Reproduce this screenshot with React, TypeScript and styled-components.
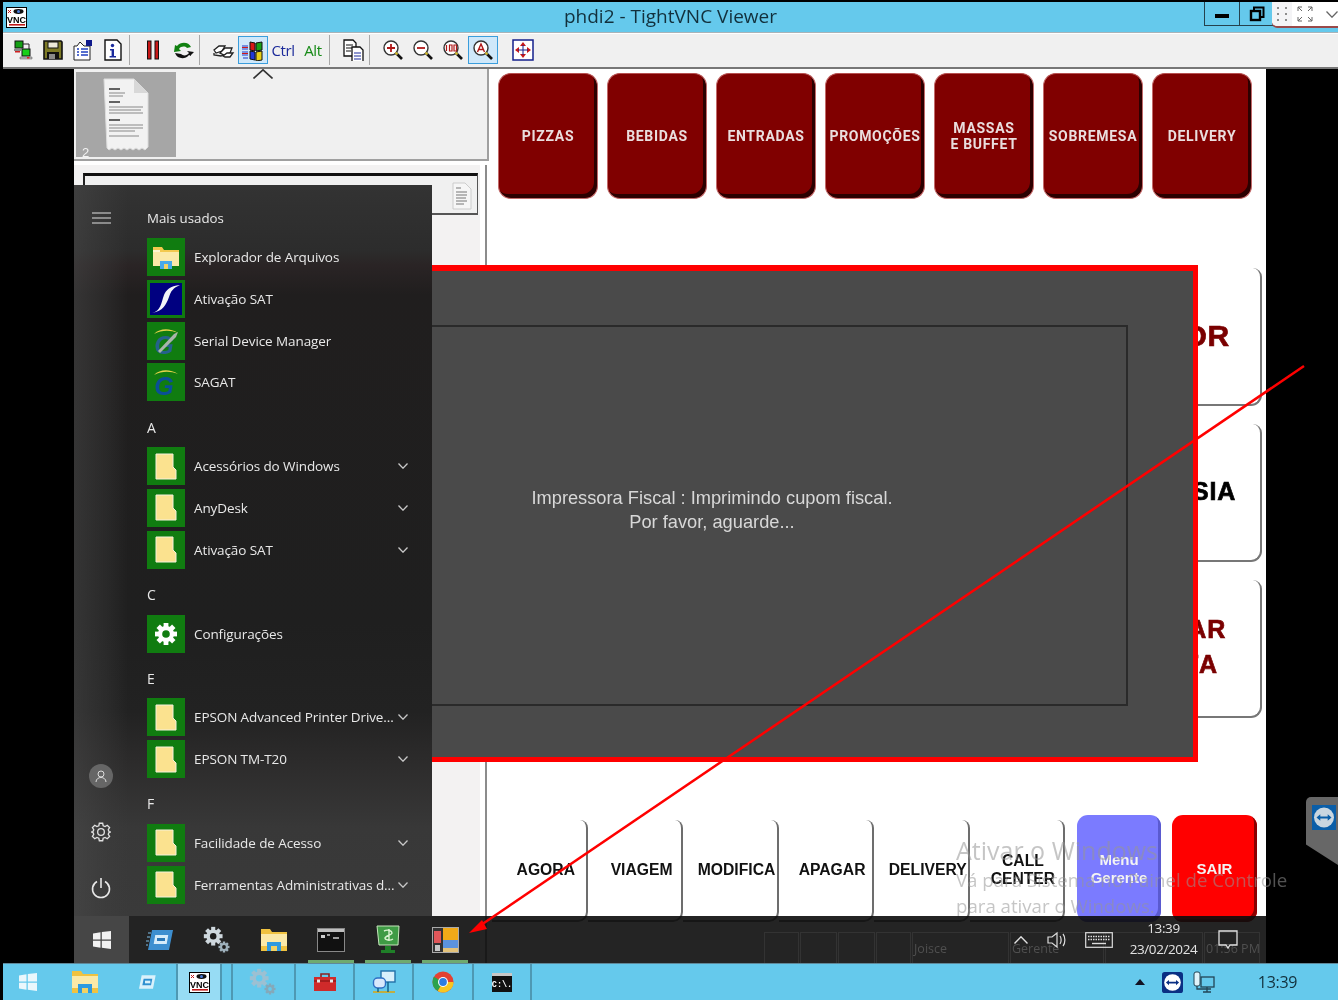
import React from "react";
import styled, { createGlobalStyle } from "styled-components";

const Global = createGlobalStyle`
  html, body { margin: 0; padding: 0; background: #000; }
  * { box-sizing: border-box; }
`;

const Desk = styled.div`
  position: relative;
  width: 1338px;
  height: 1000px;
  overflow: hidden;
  background: #000;
  padding: 2px 0 0 3px;
  display: flex;
  flex-direction: column;
  font-family: "Open Sans", "Liberation Sans", sans-serif;
  filter: blur(0.35px);
`;

const TitleBar = styled.div`
  position: relative;
  height: 30px;
  flex: none;
  background: #65c9ec;
  display: flex;
  align-items: center;
  padding-left: 3px;
`;
const TitleText = styled.div`
  position: absolute;
  left: 0;
  right: 0;
  top: 0;
  line-height: 29px;
  text-align: center;
  font-size: 19px;
  color: #12303c;
`;
const WinButtons = styled.div`
  position: absolute;
  top: 0;
  left: 1201px;
  display: flex;
`;
const WinButton = styled.div`
  width: 36px;
  height: 24px;
  border: 1px solid #24414d;
  border-top: none;
  margin-right: -1px;
  display: flex;
  align-items: center;
  justify-content: center;
`;
const Dash = styled.div`
  width: 14px;
  height: 4px;
  background: #000;
  margin-top: 4px;
`;
const RemoteBar = styled.div`
  position: absolute;
  right: 0;
  top: 0;
  width: 66px;
  height: 24px;
  background: #fff;
  border-bottom-left-radius: 5px;
  display: flex;
  align-items: center;
  box-shadow: 0 2px 0 #9a4a4a;
`;
const Grip = styled.div`
  width: 20px;
  height: 24px;
  background: #f4f4f6;
  display: flex;
  align-items: center;
  justify-content: center;
  border-bottom-left-radius: 5px;
`;

const Toolbar = styled.div`
  height: 37px;
  flex: none;
  background: #f0f0f0;
  border-top: 1px solid #a9b3b8;
  border-bottom: 2px solid #777;
  box-shadow: inset 0 1px 0 #fff;
  display: flex;
  align-items: center;
  padding-left: 5px;
`;
const ToolButton = styled.div<{ $on?: boolean }>`
  width: 30px;
  height: 28px;
  flex: none;
  display: flex;
  align-items: center;
  justify-content: center;
  background: ${(p) => (p.$on ? "#cfe8fa" : "transparent")};
  border: ${(p) => (p.$on ? "1px solid #3a9ddc" : "1px solid transparent")};
`;
const ToolSep = styled.div<{ $line?: boolean }>`
  width: 10px;
  height: 30px;
  flex: none;
  padding-left: 1px;
  &::before {
    content: "";
    display: block;
    width: 1px;
    height: 30px;
    background: ${(p) => (p.$line === false ? "transparent" : "#a8a8a8")};
  }
`;
const KeyLabel = styled.span<{ $c: string }>`
  font-family: "Open Sans", sans-serif;
  font-size: 15px;
  letter-spacing: -0.4px;
  color: ${(p) => p.$c};
`;

const Viewport = styled.div`
  flex: 1;
  min-height: 0;
  padding-left: 71px;
`;
const Screen = styled.div`
  position: relative;
  width: 1192px;
  height: 894px;
  background: #fff;
  display: grid;
  grid-template-columns: 415px 1fr;
  font-family: "Liberation Sans", Arial, sans-serif;
`;
const LeftCol = styled.div`
  display: flex;
  flex-direction: column;
  min-height: 0;
`;
const ThumbPanel = styled.div`
  height: 92px;
  flex: none;
  background: #f0f0f0;
  border-right: 2px solid #a0a0a0;
  border-bottom: 2px solid #a0a0a0;
  display: flex;
  padding: 3px 0 1px 2px;
  position: relative;
`;
const Thumb = styled.div`
  width: 100px;
  height: 85px;
  background: #a6a6a6;
  display: flex;
  align-items: flex-start;
  justify-content: center;
  padding-top: 6px;
  position: relative;
`;
const ThumbNo = styled.span`
  position: absolute;
  left: 6px;
  bottom: -3px;
  font-size: 13px;
  color: #f2f2f2;
`;
const UpChevron = styled.div`
  margin: -3px 0 0 77px;
  height: 12px;
  display: flex;
`;
const ListPanel = styled.div`
  flex: 1;
  margin: 4px 2px 0 0;
  background: #f3f2f2;
  border-right: 2px solid #8c8c8c;
  box-shadow: inset -5px 0 0 #fff;
  padding: 8px 7px 0 9px;
`;
const OrderBox = styled.div`
  height: 42px;
  background: #f0f0f0;
  border-top: 3px solid #111;
  border-left: 2px solid #222;
  border-bottom: 2px solid #555;
  border-right: 1px solid #555;
  display: flex;
  justify-content: flex-end;
  padding: 6px 5px 0 0;
`;

const RightCol = styled.div`
  display: flex;
  flex-direction: column;
  min-width: 0;
  padding-left: 9px;
`;
const CatRow = styled.div`
  margin-top: 4px;
  display: flex;
  gap: 9px;
  flex: none;
`;
const CatButton = styled.div`
  width: 100px;
  height: 126px;
  border-radius: 13px;
  background: #800000;
  border: 1px solid #c26a6a;
  border-top-color: #b75050;
  box-shadow: inset -3px -4px 0 #2c0000;
  display: flex;
  align-items: center;
  justify-content: center;
  text-align: center;
  color: #eadede;
  font-family: Roboto, "Liberation Sans", sans-serif;
  font-weight: 700;
  font-size: 14px;
  line-height: 16px;
  letter-spacing: 0.7px;
  white-space: pre-line;
  padding-bottom: 1px;
`;
const SideStack = styled.div`
  margin-top: 69px;
  align-self: flex-end;
  margin-right: 4px;
  display: flex;
  flex-direction: column;
  gap: 18px;
`;
const SideButton = styled.div<{ $c: string; $size: number; $right: number }>`
  width: 220px;
  height: 138px;
  background: #fff;
  border-right: 2px solid #777;
  border-bottom: 2px solid #777;
  border-radius: 0 9px 11px 0;
  display: flex;
  align-items: center;
  justify-content: flex-end;
  text-align: center;
  padding: 0 ${(p) => p.$right}px 2px 0;
  color: ${(p) => p.$c};
  font-weight: 700;
  font-size: ${(p) => p.$size}px;
  font-kerning: none;
  line-height: 35px;
  -webkit-text-stroke: 0.7px ${(p) => p.$c};
  letter-spacing: 0.8px;
  white-space: pre-line;
`;
const BottomRow = styled.div`
  margin: 102px 0 0 -6px;
  display: flex;
  flex: none;
`;
const ActionButton = styled.div`
  width: 95.5px;
  height: 102px;
  background: #fff;
  border-right: 2px solid #6d6d6d;
  border-bottom: 2px solid #6d6d6d;
  border-radius: 0 8px 10px 0;
  display: flex;
  align-items: center;
  justify-content: center;
  padding: 0 0 1px 14px;
  font-size: 16px;
  font-weight: 700;
  line-height: 18px;
  color: #111;
  text-align: center;
  white-space: pre-line;
`;
const ActionInner = styled.span`
  display: block;
  white-space: pre-line;
  transform: scaleX(0.98);
  flex: none;
`;
const ManagerButton = styled.div<{ $bg: string; $ml: number; $edge: string; $w: number }>`
  width: ${(p) => p.$w}px;
  height: 107px;
  margin: -5px 0 0 ${(p) => p.$ml}px;
  background: ${(p) => p.$bg};
  border-radius: 11px;
  box-shadow: inset -3px -3px 0 ${(p) => p.$edge};
  display: flex;
  align-items: center;
  justify-content: center;
  color: #f4f4f4;
  font-size: 15px;
  font-weight: 700;
  line-height: 18px;
  text-align: center;
  white-space: pre-line;
`;

const Dialog = styled.div`
  position: absolute;
  left: 152px;
  top: 196px;
  width: 972px;
  height: 497px;
  background: #4a4a4a;
  border: solid #f00;
  border-width: 6px 5px 5px 5px;
  padding: 54px 65px 51px;
  display: flex;
`;
const DialogInner = styled.div`
  flex: 1;
  border: 2px solid #2a2a2a;
  display: flex;
  align-items: center;
  justify-content: center;
  text-align: center;
  padding-bottom: 12px;
  color: #d8d8d8;
  font-size: 18.25px;
  line-height: 24px;
`;

const Watermark = styled.div`
  position: absolute;
  left: 882px;
  top: 765px;
  color: rgba(150, 150, 150, 0.55);
  font-family: "Open Sans", sans-serif;
  font-size: 18.65px;
  line-height: 26px;
  white-space: nowrap;
  pointer-events: none;
`;
const WatermarkHead = styled.div`
  font-size: 25px;
  line-height: 33px;
`;

const StartMenu = styled.div`
  position: absolute;
  left: 0;
  top: 116px;
  width: 358px;
  height: 731px;
  background: linear-gradient(
    180deg,
    #333 0,
    #2c2c2c 9%,
    #2a2425 11%,
    #201e1e 15%,
    #1f1f1f 60%,
    #222 72%,
    #2b2a2a 78%,
    #383838 88%,
    #3a3a3a 100%
  );
  display: flex;
  color: #e8e8e8;
  font-family: "Open Sans", sans-serif;
`;
const Rail = styled.div`
  width: 54px;
  flex: none;
  display: flex;
  flex-direction: column;
  align-items: center;
  background: linear-gradient(90deg, rgba(75, 75, 75, 0.5) 0, rgba(65, 65, 65, 0.3) 60%, rgba(54, 54, 54, 0) 100%);
`;
const RailTop = styled.div`
  height: 30px;
  margin-top: 18px;
  display: flex;
  align-items: center;
  flex: none;
`;
const RailBottom = styled.div`
  margin-top: auto;
  display: flex;
  flex-direction: column;
  align-items: center;
`;
const RailSlot = styled.div`
  height: 56px;
  width: 54px;
  display: flex;
  align-items: center;
  justify-content: center;
`;
const Avatar = styled.div`
  width: 24px;
  height: 24px;
  border-radius: 50%;
  background: #666;
  display: flex;
  align-items: center;
  justify-content: center;
`;
const MenuList = styled.div`
  flex: 1;
  padding: 9px 0 0 19px;
  display: grid;
  grid-auto-rows: 41.87px;
  min-width: 0;
`;
const MenuHead = styled.div<{ $first?: boolean }>`
  display: flex;
  align-items: center;
  padding-top: 6px;
  font-size: ${(p) => (p.$first ? 13.3 : 14)}px;
`;
const MenuItem = styled.div`
  display: flex;
  align-items: center;
  font-size: 13.5px;
  letter-spacing: -0.1px;
  min-width: 0;
`;
const Tile = styled.div`
  width: 38px;
  height: 38px;
  flex: none;
  background: #107c10;
  display: flex;
  align-items: center;
  justify-content: center;
  margin-right: 9px;
`;
const ItemName = styled.span`
  flex: 1;
  white-space: nowrap;
  min-width: 0;
`;
const ItemChevron = styled.div`
  width: 18px;
  flex: none;
  margin-right: 20px;
  display: flex;
  justify-content: center;
`;

const WinBar = styled.div`
  position: absolute;
  left: 0;
  top: 847px;
  width: 1192px;
  height: 47px;
  background: rgba(12, 12, 12, 0.9);
  display: flex;
  color: #dedede;
  font-family: "Open Sans", sans-serif;
`;
const StartCell = styled.div`
  width: 55px;
  background: #464646;
  display: flex;
  align-items: center;
  justify-content: center;
  flex: none;
  margin-right: 2.5px;
`;
const BarSlot = styled.div<{ $run?: boolean }>`
  position: relative;
  width: 57px;
  flex: none;
  display: flex;
  align-items: center;
  justify-content: center;
  &::after {
    content: "";
    display: ${(p) => (p.$run ? "block" : "none")};
    position: absolute;
    left: 5px;
    right: 6px;
    bottom: 0;
    height: 3px;
    background: #6faa6f;
  }
`;
const Tray = styled.div`
  margin-left: auto;
  display: flex;
  padding-right: 15px;
  z-index: 1;
`;
const TraySlot = styled.div<{ $w: number }>`
  width: ${(p) => p.$w}px;
  display: flex;
  align-items: center;
  justify-content: center;
`;
const Clock = styled.div`
  text-align: center;
  font-size: 13.5px;
  line-height: 21px;
  letter-spacing: -0.4px;
  margin-top: -2px;
  color: #e2e2e2;
`;
const GhostStrip = styled.div`
  position: absolute;
  left: 690px;
  top: 16px;
  bottom: 0;
  display: flex;
  color: #4f4f4f;
  font-size: 12.5px;
`;
const GhostCell = styled.div<{ $w: number }>`
  width: ${(p) => p.$w}px;
  border: 1px solid #333;
  border-bottom: none;
  margin-right: 1px;
  display: flex;
  align-items: center;
  padding-left: 1px;
  white-space: nowrap;
`;

const Taskbar = styled.div`
  height: 37px;
  flex: none;
  margin-top: auto;
  background: #65c9ec;
  border-top: 1px solid #5f8899;
  display: flex;
  color: #12303c;
  position: relative;
`;
const TaskSlot = styled.div<{ $w: number; $on?: boolean; $line?: boolean }>`
  width: ${(p) => p.$w}px;
  flex: none;
  display: flex;
  align-items: center;
  justify-content: center;
  background: ${(p) => (p.$on ? "#97dcf4" : "transparent")};
  border-right: ${(p) => (p.$line ? "2px solid #4e98b3" : "none")};
  border-left: ${(p) => (p.$on ? "2px solid #4e98b3" : "none")};
`;
const TaskTray = styled.div`
  margin-left: auto;
  display: flex;
  align-items: center;
  padding-right: 3px;
`;
const TrayIcon = styled.div`
  width: 32px;
  display: flex;
  justify-content: center;
`;
const TaskClock = styled.div`
  width: 115px;
  text-align: center;
  font-size: 16px;
  letter-spacing: -0.3px;
`;

const TvTab = styled.div`
  position: absolute;
  right: 0;
  top: 797px;
  width: 32px;
  height: 68px;
  background: #676767;
  border-top-left-radius: 5px;
  clip-path: polygon(0 0, 100% 0, 100% 100%, 0 70%);
  padding: 8px 0 0 6px;
`;
const ArrowLayer = styled.svg`
  position: absolute;
  left: 0;
  top: 0;
  pointer-events: none;
`;

const S: React.FC<{ w?: number; h?: number; vb?: string; children: React.ReactNode }> = ({
  w = 22,
  h = 22,
  vb,
  children,
}) => (
  <svg width={w} height={h} viewBox={vb ?? `0 0 ${w} ${h}`}>
    {children}
  </svg>
);

const VncLogo: React.FC<{ size?: number }> = ({ size = 21 }) => (
  <svg width={size} height={size} viewBox="0 0 21 21">
    <rect x="0.5" y="0.5" width="20" height="20" fill="#fff" stroke="#000" />
    <path d="M2 3l3 3M5 3L2 6" stroke="#c01818" strokeWidth="1" />
    <ellipse cx="12.5" cy="4.5" rx="5" ry="2.4" fill="#111" />
    <circle cx="12.5" cy="4.5" r="1.5" fill="#4a7bd8" />
    <text x="10.5" y="15.5" textAnchor="middle" fontFamily="Liberation Sans" fontWeight="700" fontSize="9" fill="#000">
      VNC
    </text>
    <rect x="3" y="17" width="16" height="1.6" fill="#c01818" />
  </svg>
);

const Mag: React.FC<{ children?: React.ReactNode }> = ({ children }) => (
  <S>
    <circle cx="9" cy="9" r="7" fill="#fff" stroke="#333" strokeWidth="1.4" />
    <path d="M14 14l6 6" stroke="#111" strokeWidth="2.6" />
    <path d="M13.5 13.5l2 2" stroke="#d8c030" strokeWidth="2" />
    {children}
  </S>
);

const ToolIcons = {
  conn: (
    <S>
      <rect x="3" y="2" width="8" height="7" fill="#14a014" stroke="#111" />
      <rect x="10" y="10" width="8" height="7" fill="#18d018" stroke="#111" />
      <path d="M11 5h6v5M2 11h7" stroke="#222" fill="none" />
      <rect x="3" y="12" width="5" height="1.5" fill="#d02020" />
      <path d="M8 18h12v2H8z" fill="#bbb" stroke="#555" strokeWidth=".5" />
      <rect x="15" y="18" width="2.5" height="1.5" fill="#e02020" />
    </S>
  ),
  save: (
    <S>
      <path d="M2 2h17l1 1v17H2z" fill="#7d7a26" stroke="#111" strokeWidth="1.6" />
      <rect x="6" y="3" width="10" height="6" fill="#ece9d8" stroke="#111" />
      <rect x="5" y="13" width="12" height="7" fill="#111" />
      <rect x="7" y="15" width="6" height="5" fill="#8a8a8a" />
    </S>
  ),
  opts: (
    <S>
      <path d="M2 7h3l3-4 4 4h6v14H2z" fill="#fff" stroke="#222" />
      <rect x="14" y="1" width="6" height="6" fill="#101a8c" />
      <path d="M5 10h2M9 10h7M5 13h2M9 13h7M5 16h2M9 16h7" stroke="#2040c0" strokeWidth="1.4" />
    </S>
  ),
  info: (
    <S>
      <path d="M3 1h12l4 4v16H3z" fill="#fff" stroke="#111" strokeWidth="1.4" />
      <circle cx="10.5" cy="6.5" r="1.7" fill="#1a2a9c" />
      <path d="M8 10h4v7h2v1.6H7.6V17h2v-5.4H8z" fill="#1a2a9c" />
    </S>
  ),
  pause: (
    <S>
      <rect x="5.5" y="2" width="3.5" height="18" fill="#c81818" stroke="#111" />
      <rect x="13" y="2" width="3.5" height="18" fill="#c81818" stroke="#111" />
    </S>
  ),
  refresh: (
    <S w={24}>
      <path d="M20 8C18 3 10 2 6 7l-2-1-1 7 7-1-2-2c2-3 6-3 8-1z" fill="#108010" />
      <path d="M4 14c2 6 10 7 14 2l2 1 0-1 3-3-7-1 2 2c-2 3-6 3-8 1z" fill="#111" />
    </S>
  ),
  cad: (
    <S w={24}>
      <path d="M3 11l5-4h6l-3 5-6 2z" fill="#fff" stroke="#222" strokeWidth="1.3" />
      <path d="M9 14l5-5h7l-2 5-6 2z" fill="#fff" stroke="#222" strokeWidth="1.3" />
      <path d="M12 17l4-3h6l-3 4h-5z" fill="#fff" stroke="#222" strokeWidth="1.3" />
      <path d="M3 14v2l7 1 2-1" fill="none" stroke="#222" strokeWidth="1.3" />
    </S>
  ),
  win: (
    <S w={24}>
      <path d="M9 3l5 1v8L9 11z" fill="#d81818" stroke="#111" />
      <path d="M15 4l6-1v8l-6 1z" fill="#18a018" stroke="#111" />
      <path d="M9 12l5 1v8l-5-1z" fill="#2038d8" stroke="#111" />
      <path d="M15 13l6-1v9l-6 1z" fill="#e8d018" stroke="#111" />
      <path d="M1 7h6M1 10h6M1 13h6M1 16h6M2 19h5" stroke="#2038c8" strokeWidth="1.2" />
      <path d="M1 8.5h6M1 14.5h6" stroke="#d01818" strokeWidth="1" />
    </S>
  ),
  copy: (
    <S w={24}>
      <path d="M3 1h9l3 3v13H3z" fill="#fff" stroke="#111" strokeWidth="1.3" />
      <path d="M5 6h7M5 9h7M5 12h5" stroke="#111" />
      <path d="M11 8h8l3 3v12H11z" fill="#fff" stroke="#111" strokeWidth="1.3" />
      <path d="M13 14h7M13 17h7M13 20h7" stroke="#1a2a9c" />
    </S>
  ),
  plus: (
    <Mag>
      <path d="M5 9h8M9 5v8" stroke="#b01818" strokeWidth="1.8" />
    </Mag>
  ),
  minus: (
    <Mag>
      <path d="M5 9h8" stroke="#b01818" strokeWidth="1.8" />
    </Mag>
  ),
  hundred: (
    <Mag>
      <path d="M4.5 6v6M7.5 6h2.5v6H7.5zM12 6h2.5v6H12z" stroke="#b01818" strokeWidth="1.2" fill="none" />
    </Mag>
  ),
  auto: (
    <Mag>
      <path d="M5.5 13l3.5-8 3.5 8M6.5 10.5h5" stroke="#b01818" strokeWidth="1.4" fill="none" />
    </Mag>
  ),
  full: (
    <S>
      <rect x="1" y="1" width="20" height="20" fill="#fff" stroke="#15208c" strokeWidth="1.5" />
      <path d="M11 3l3 4H8zM11 19l3-4H8zM3 11l4-3v6zM19 11l-4-3v6z" fill="#c81818" />
      <path d="M11 6v10M6 11h10" stroke="#15208c" />
    </S>
  ),
};

const DocPage: React.FC = () => (
  <svg width="46" height="74" viewBox="0 0 46 74">
    <path d="M1 1h30l14 14v54l-3 3-3-2-3 2-3-2-3 2-3-2-3 2-3-2-3 2-3-2-3 2-3-2-3 2-2-2z" fill="#f2f2f2" stroke="#dcdcdc" />
    <path d="M31 1l14 14H31z" fill="#d8d8d8" />
    <path d="M6 11h11M6 24h11M6 42h11" stroke="#333" strokeWidth="1.6" />
    <path d="M6 15h16M6 18h14M6 29h34M6 32h32M6 35h34M6 47h34M6 50h34M6 53h26M6 58h30" stroke="#888" strokeWidth="1.2" />
  </svg>
);
const DocSmall: React.FC = () => (
  <svg width="20" height="28" viewBox="0 0 20 28">
    <path d="M1 1h12l6 6v20H1z" fill="#f6f6f6" stroke="#ccc" />
    <path d="M4 6h5M4 10h11M4 13h11M4 16h10M4 19h11M4 22h8" stroke="#777" />
  </svg>
);

const FolderTile = (
  <svg width="22" height="27" viewBox="0 0 22 27">
    <path d="M1 1h17v13l3 3v9H1z" fill="#fbe28f" stroke="#f5f1dc" strokeWidth="1" />
  </svg>
);
const ExplorerIcon = (
  <svg width="28" height="26" viewBox="0 0 28 26">
    <path d="M1 3h9l2 3h15v16H1z" fill="#f3c94f" />
    <rect x="1" y="8" width="26" height="14" fill="#fbe9a8" />
    <rect x="1" y="6" width="7" height="2" fill="#fff6d0" />
    <path d="M8 17h12v8H8z" fill="#49a9e8" />
    <rect x="12" y="20" width="4" height="5" fill="#f3d263" />
  </svg>
);
const SatIcon = (
  <svg width="32" height="32" viewBox="0 0 32 32">
    <rect width="32" height="32" fill="#000080" />
    <path d="M2 30c9-2 9-10 12-18 2-5 6-9 16-10-7 3-9 6-11 12-3 8-6 14-17 16z" fill="#f2f4f8" />
  </svg>
);
const GArc = <path d="M3 9c6-6 16-6 24-1-8-3-16-3-24 1z" fill="#e6d24a" />;
const SagatG = (
  <svg width="34" height="34" viewBox="0 0 34 34">
    <g transform="translate(2 1)">{GArc}</g>
    <text x="15" y="30" textAnchor="middle" fontFamily="Liberation Sans" fontStyle="italic" fontWeight="700" fontSize="25" fill="#0a4f96">
      G
    </text>
  </svg>
);
const SerialG = (
  <svg width="34" height="34" viewBox="0 0 34 34">
    <g transform="translate(2 1)">{GArc}</g>
    <text x="15" y="30" textAnchor="middle" fontFamily="Liberation Sans" fontStyle="italic" fontWeight="700" fontSize="25" fill="#25628a">
      G
    </text>
    <path d="M9 27l16-17 4-2-2 5-16 16z" fill="#a9b4a9" />
  </svg>
);
const GearIcon: React.FC<{ size: number; c: string; hole: string }> = ({ size, c, hole }) => (
  <svg width={size} height={size} viewBox="0 0 24 24">
    <GearGroup c={c} hole={hole} />
  </svg>
);
const Chev: React.FC<{ c?: string; w?: number; h?: number; up?: boolean; sw?: number }> = ({
  c = "#c8c8c8",
  w = 10,
  h = 6,
  up,
  sw = 1.3,
}) => (
  <svg width={w} height={h} viewBox={`0 0 ${w} ${h}`}>
    <path
      d={up ? `M0.5 ${h - 0.5}L${w / 2} 0.8L${w - 0.5} ${h - 0.5}` : `M0.5 0.5L${w / 2} ${h - 0.8}L${w - 0.5} 0.5`}
      fill="none"
      stroke={c}
      strokeWidth={sw}
    />
  </svg>
);
const WinLogo: React.FC<{ c: string; size?: number }> = ({ c, size = 20 }) => (
  <svg width={size} height={size} viewBox="0 0 20 20">
    <path d="M1 3.5l7.5-1.2v7.2H1zM9.8 2.1L19 1v8.5H9.8zM1 10.8h7.5v7L1 16.6zM9.8 10.8H19V19l-9.2-1.2z" fill={c} />
  </svg>
);
const ServerIcon = (
  <svg width="28" height="24" viewBox="0 0 28 24">
    <path d="M6 2h21l-4 20H2z" fill="#3d8fd0" />
    <path d="M2 5h3M1 9h3M0 13h3M0 17h2" stroke="#7fc0ea" />
    <rect x="8.5" y="7" width="13" height="9" fill="#d6ecfa" transform="skewX(-10) translate(2 0)" />
    <rect x="11" y="10" width="8" height="3" fill="#2a78b8" />
  </svg>
);
const BigFolder = (
  <svg width="28" height="24" viewBox="0 0 28 24">
    <path d="M1 1h9l2 3h15v19H1z" fill="#f0c240" />
    <rect x="1" y="6" width="26" height="12" fill="#fbe9a8" />
    <path d="M7 14h14v9H7z" fill="#2e9ae0" />
    <rect x="11" y="18" width="6" height="5" fill="#f3d263" />
  </svg>
);
const ConsoleIcon = (
  <svg width="28" height="24" viewBox="0 0 28 24">
    <rect x="0.5" y="0.5" width="27" height="23" fill="#111" stroke="#888" />
    <rect x="1" y="1" width="26" height="3" fill="#bfbfbf" />
    <rect x="4" y="7" width="4" height="3" fill="#ccc" />
    <path d="M10 7h3M16 10h6" stroke="#ccc" strokeWidth="1.3" />
  </svg>
);
const GreenTerm = (
  <svg width="26" height="30" viewBox="0 0 26 30">
    <path d="M2 1h22l-1 19H4z" fill="#3f9b45" stroke="#c6e6bc" strokeWidth="1" />
    <path d="M10 21h6v4h4v3H6v-3h4z" fill="#1f7f28" />
    <path d="M9 6c4-2 8 0 8 2s-7 3-7 5 5 3 8 1M14 4v12" fill="none" stroke="#d9f2d0" strokeWidth="1.4" />
  </svg>
);
const PaletteIcon = (
  <svg width="27" height="26" viewBox="0 0 27 26">
    <rect x="0.5" y="0.5" width="26" height="25" fill="#333" stroke="#aaa" />
    <rect x="11" y="1" width="15" height="12" fill="#f0a918" />
    <rect x="11" y="13" width="15" height="8" fill="#5c93de" />
    <rect x="11" y="21" width="15" height="4" fill="#e3c27a" />
    <rect x="2" y="4" width="7" height="12" fill="#e0575a" />
    <rect x="3" y="18" width="5" height="6" fill="#c8c8c8" />
  </svg>
);
const Toolbox = (
  <svg width="22" height="18" viewBox="0 0 22 18">
    <path d="M7 4V1h8v3" fill="none" stroke="#8a2222" strokeWidth="1.6" />
    <path d="M0 4h22v14H0z" fill="#cf2a2a" />
    <path d="M0 8h22" stroke="#7a1010" />
    <rect x="3" y="6.5" width="3" height="3" fill="#e8e8e8" />
    <rect x="16" y="6.5" width="3" height="3" fill="#e8e8e8" />
  </svg>
);
const NetIcon = (
  <svg width="24" height="24" viewBox="0 0 24 24">
    <rect x="9" y="1" width="14" height="11" fill="#d8f0fc" stroke="#2270a8" strokeWidth="1.4" />
    <rect x="1.5" y="8" width="12" height="10" rx="4" fill="#d8e8fb" stroke="#2e6fc4" strokeWidth="1.4" />
    <path d="M1 22h22" stroke="#d8a818" strokeWidth="1.6" />
    <path d="M6 18v4M16 12v10" stroke="#0f5f8a" strokeWidth="1.4" />
  </svg>
);
const ChromeIcon = (
  <svg width="22" height="22" viewBox="0 0 22 22">
    <circle cx="11" cy="11" r="10.5" fill="#e34133" />
    <path d="M11 11l-5.25 9.1A10.5 10.5 0 0 1 .5 11a10.5 10.5 0 0 1 1.4-5.25z" fill="#2aa24b" />
    <path d="M11 11h10.5a10.5 10.5 0 0 1-15.75 9.1z" fill="#f9c620" />
    <circle cx="11" cy="11" r="5" fill="#fff" />
    <circle cx="11" cy="11" r="3.9" fill="#2f7de1" />
  </svg>
);
const CmdIcon = (
  <svg width="20" height="19" viewBox="0 0 20 19">
    <rect width="20" height="19" fill="#111" />
    <rect y="0" width="20" height="3" fill="#c8c8c8" />
    <text x="10" y="14" textAnchor="middle" fontFamily="Liberation Mono" fontWeight="700" fontSize="8.5" fill="#fff">
      C:\.
    </text>
  </svg>
);
const TvBadge: React.FC<{ size: number }> = ({ size }) => (
  <svg width={size} height={size} viewBox="0 0 24 24">
    <rect width="24" height="24" rx="3" fill="#0a2f83" />
    <circle cx="12" cy="12" r="9.5" fill="#fff" />
    <path d="M4.5 12l3.5-3v2h8V9l3.5 3-3.5 3v-2H8v2z" fill="#0a2f83" />
  </svg>
);
const TvSquare = (
  <svg width="24" height="25" viewBox="0 0 24 25">
    <rect width="24" height="25" fill="#0a5ea8" />
    <circle cx="12" cy="12.5" r="10" fill="#c9d6e0" />
    <path d="M4.5 12.5l3.8-3.2v2.2h7.4V9.3l3.8 3.2-3.8 3.2v-2.2H8.3v2.2z" fill="#0a5ea8" />
  </svg>
);

type Row =
  | { t: "h"; label: string; first?: boolean }
  | { t: "i"; label: string; icon: React.ReactNode; more?: boolean };

const menu: Row[] = [
  { t: "h", label: "Mais usados", first: true },
  { t: "i", label: "Explorador de Arquivos", icon: ExplorerIcon },
  { t: "i", label: "Ativação SAT", icon: SatIcon },
  { t: "i", label: "Serial Device Manager", icon: SerialG },
  { t: "i", label: "SAGAT", icon: SagatG },
  { t: "h", label: "A" },
  { t: "i", label: "Acessórios do Windows", icon: FolderTile, more: true },
  { t: "i", label: "AnyDesk", icon: FolderTile, more: true },
  { t: "i", label: "Ativação SAT", icon: FolderTile, more: true },
  { t: "h", label: "C" },
  { t: "i", label: "Configurações", icon: <GearIcon size={24} c="#fff" hole="#107c10" /> },
  { t: "h", label: "E" },
  { t: "i", label: "EPSON Advanced Printer Drive...", icon: FolderTile, more: true },
  { t: "i", label: "EPSON TM-T20", icon: FolderTile, more: true },
  { t: "h", label: "F" },
  { t: "i", label: "Facilidade de Acesso", icon: FolderTile, more: true },
  { t: "i", label: "Ferramentas Administrativas d...", icon: FolderTile, more: true },
];

const cats = ["PIZZAS", "BEBIDAS", "ENTRADAS", "PROMOÇÕES", "MASSAS\nE BUFFET", "SOBREMESA", "DELIVERY"];
const actions = ["AGORA", "VIAGEM", "MODIFICA", "APAGAR", "DELIVERY", "CALL\nCENTER"];
const ghosts: { w: number; label?: string }[] = [
  { w: 35 },
  { w: 37 },
  { w: 37 },
  { w: 35 },
  { w: 97, label: "Joisce" },
  { w: 94, label: "Gerente" },
  { w: 98 },
  { w: 56, label: "01:56 PM" },
];

export default function App() {
  return (
    <Desk>
      <Global />
      <TitleBar>
        <VncLogo />
        <TitleText>phdi2 - TightVNC Viewer</TitleText>
        <WinButtons>
          <WinButton>
            <Dash />
          </WinButton>
          <WinButton>
            <svg width="16" height="16" viewBox="0 0 16 16">
              <path d="M5 4V1.5h9.5V11H12" fill="none" stroke="#000" strokeWidth="2" />
              <rect x="2" y="5" width="9" height="9" fill="none" stroke="#000" strokeWidth="2.4" />
            </svg>
          </WinButton>
        </WinButtons>
        <RemoteBar>
          <Grip>
            <svg width="10" height="14" viewBox="0 0 10 14">
              <g fill="#8d8d8d">
                <rect x="0" y="0" width="2" height="2" />
                <rect x="8" y="0" width="2" height="2" />
                <rect x="0" y="6" width="2" height="2" />
                <rect x="8" y="6" width="2" height="2" />
                <rect x="0" y="12" width="2" height="2" />
                <rect x="8" y="12" width="2" height="2" />
              </g>
            </svg>
          </Grip>
          <svg width="34" height="24" viewBox="0 0 34 24">
            <path
              d="M6 5h4M6 5v4M6 5l4 4M20 5h-4M20 5v4M20 5l-4 4M6 19h4M6 19v-4M6 19l4-4M20 19h-4M20 19v-4M20 19l-4-4"
              stroke="#666"
              fill="none"
            />
          </svg>
          <Chev c="#666" w={12} h={7} />
        </RemoteBar>
      </TitleBar>

      <Toolbar>
        <ToolButton>{ToolIcons.conn}</ToolButton>
        <ToolButton>{ToolIcons.save}</ToolButton>
        <ToolButton>{ToolIcons.opts}</ToolButton>
        <ToolButton>{ToolIcons.info}</ToolButton>
        <ToolSep />
        <ToolButton>{ToolIcons.pause}</ToolButton>
        <ToolButton>{ToolIcons.refresh}</ToolButton>
        <ToolSep />
        <ToolButton>{ToolIcons.cad}</ToolButton>
        <ToolButton $on>{ToolIcons.win}</ToolButton>
        <ToolButton>
          <KeyLabel $c="#1b2a9a">Ctrl</KeyLabel>
        </ToolButton>
        <ToolButton>
          <KeyLabel $c="#168a16">Alt</KeyLabel>
        </ToolButton>
        <ToolSep />
        <ToolButton>{ToolIcons.copy}</ToolButton>
        <ToolSep />
        <ToolButton>{ToolIcons.plus}</ToolButton>
        <ToolButton>{ToolIcons.minus}</ToolButton>
        <ToolButton>{ToolIcons.hundred}</ToolButton>
        <ToolButton $on>{ToolIcons.auto}</ToolButton>
        <ToolSep $line={false} />
        <ToolButton>{ToolIcons.full}</ToolButton>
      </Toolbar>

      <Viewport>
        <Screen>
          <LeftCol>
            <ThumbPanel>
              <Thumb>
                <DocPage />
                <ThumbNo>2</ThumbNo>
              </Thumb>
              <UpChevron>
                <Chev up c="#333" w={20} h={10} sw={1.6} />
              </UpChevron>
            </ThumbPanel>
            <ListPanel>
              <OrderBox>
                <DocSmall />
              </OrderBox>
            </ListPanel>
          </LeftCol>

          <RightCol>
            <CatRow>
              {cats.map((c) => (
                <CatButton key={c}>{c}</CatButton>
              ))}
            </CatRow>
            <SideStack>
              <SideButton $c="#7a0000" $size={30} $right={30}>
                MONITOR
              </SideButton>
              <SideButton $c="#000" $size={25} $right={24}>
                CORTESIA
              </SideButton>
              <SideButton $c="#7a0000" $size={25} $right={34}>
                {"FECHAR\nCONTA"}
              </SideButton>
            </SideStack>
            <BottomRow>
              {actions.map((a) => (
                <ActionButton key={a}>
                  <ActionInner>{a}</ActionInner>
                </ActionButton>
              ))}
              <ManagerButton $bg="#7b7bff" $ml={12} $edge="#5a5ad0" $w={84}>
                {"Menu\nGerente"}
              </ManagerButton>
              <ManagerButton $bg="#f00" $ml={11} $edge="#8a0000" $w={85}>
                SAIR
              </ManagerButton>
            </BottomRow>
          </RightCol>

          <Dialog>
            <DialogInner>
              Impressora Fiscal : Imprimindo cupom fiscal.
              <br />
              Por favor, aguarde...
            </DialogInner>
          </Dialog>

          <Watermark>
            <WatermarkHead>Ativar o Windows</WatermarkHead>
            <div>Vá para Sistema no Painel de Controle</div>
            <div>para ativar o Windows.</div>
          </Watermark>

          <StartMenu>
            <Rail>
              <RailTop>
                <svg width="19" height="12" viewBox="0 0 19 12">
                  <path d="M0 1h19M0 6h19M0 11h19" stroke="#e0e0e0" strokeWidth="1.2" />
                </svg>
              </RailTop>
              <RailBottom>
                <RailSlot>
                  <Avatar>
                    <svg width="12" height="13" viewBox="0 0 12 13">
                      <circle cx="6" cy="4" r="3" fill="none" stroke="#ddd" />
                      <path d="M1 12c0-6 10-6 10 0" fill="none" stroke="#ddd" />
                    </svg>
                  </Avatar>
                </RailSlot>
                <RailSlot>
                  <svg width="20" height="20" viewBox="0 0 24 24">
                    <g fill="none" stroke="#e0e0e0" strokeWidth="1.6">
                      <path d="M10 1.500h4l.6 3 2.300 1 2.600-1.600 2.800 2.800L20.700 9.300l1 2.300 2 .4v0l0 0v0l-2 .4-1 2.300 1.600 2.600-2.800 2.800-2.600-1.600-2.300 1-.6 3h-4l-.6-3-2.300-1-2.600 1.600-2.800-2.800 1.600-2.600-1-2.300-2-.4v0l2-.4 1-2.300L1.700 6.700 4.500 3.900l2.600 1.600 2.300-1z" />
                      <circle cx="12" cy="12" r="4" />
                    </g>
                  </svg>
                </RailSlot>
                <RailSlot>
                  <svg width="20" height="22" viewBox="0 0 20 22">
                    <path d="M6 4.500a8.500 8.500 0 1 0 8 0" fill="none" stroke="#e8e8e8" strokeWidth="1.6" />
                    <path d="M10 1v10" stroke="#e8e8e8" strokeWidth="1.6" />
                  </svg>
                </RailSlot>
              </RailBottom>
            </Rail>
            <MenuList>
              {menu.map((r, i) =>
                r.t === "h" ? (
                  <MenuHead key={i} $first={r.first}>
                    {r.label}
                  </MenuHead>
                ) : (
                  <MenuItem key={i}>
                    <Tile>{r.icon}</Tile>
                    <ItemName>{r.label}</ItemName>
                    {r.more && (
                      <ItemChevron>
                        <Chev />
                      </ItemChevron>
                    )}
                  </MenuItem>
                )
              )}
            </MenuList>
          </StartMenu>

          <WinBar>
            <StartCell>
              <WinLogo c="#f2f2f2" />
            </StartCell>
            <BarSlot>{ServerIcon}</BarSlot>
            <BarSlot>
              <svg width="29" height="28" viewBox="0 0 29 28">
                <g transform="scale(0.85)">
                  <GearGroup c="#cfd8de" hole="#1c1c1c" />
                </g>
                <g transform="translate(15 15) scale(0.5)">
                  <GearGroup c="#9fb2bd" hole="#1c1c1c" />
                </g>
              </svg>
            </BarSlot>
            <BarSlot>{BigFolder}</BarSlot>
            <BarSlot $run>{ConsoleIcon}</BarSlot>
            <BarSlot $run>{GreenTerm}</BarSlot>
            <BarSlot $run>{PaletteIcon}</BarSlot>
            <GhostStrip>
              {ghosts.map((g, i) => (
                <GhostCell key={i} $w={g.w}>
                  {g.label}
                </GhostCell>
              ))}
            </GhostStrip>
            <Tray>
              <TraySlot $w={35}>
                <Chev up c="#e0e0e0" w={14} h={8} sw={1.4} />
              </TraySlot>
              <TraySlot $w={38}>
                <svg width="20" height="18" viewBox="0 0 20 18">
                  <path d="M1 6h4l5-4v14l-5-4H1z" fill="none" stroke="#ddd" strokeWidth="1.2" />
                  <path d="M13 5c1.500 2 1.500 6 0 8M16 3c2.500 3 2.500 9 0 12" fill="none" stroke="#ddd" strokeWidth="1.2" />
                </svg>
              </TraySlot>
              <TraySlot $w={46}>
                <svg width="28" height="16" viewBox="0 0 28 16">
                  <rect x="0.700" y="0.700" width="26.600" height="14.600" fill="none" stroke="#ddd" strokeWidth="1.2" />
                  <path d="M3 4.500h22M3 7.500h22" stroke="#ddd" strokeWidth="1.400" strokeDasharray="1.500 1" />
                  <path d="M7 11.500h14" stroke="#ddd" strokeWidth="1.400" />
                </svg>
              </TraySlot>
              <TraySlot $w={83}>
                <Clock>
                  13:39
                  <br />
                  23/02/2024
                </Clock>
              </TraySlot>
              <TraySlot $w={46}>
                <svg width="20" height="20" viewBox="0 0 20 20">
                  <path d="M1 1h18v14h-7l-2 3-2-3H1z" fill="none" stroke="#e0e0e0" strokeWidth="1.300" />
                </svg>
              </TraySlot>
            </Tray>
          </WinBar>
        </Screen>
      </Viewport>

      <Taskbar>
        <TaskSlot $w={49}>
          <WinLogo c="#eaf7fc" />
        </TaskSlot>
        <TaskSlot $w={66}>{BigFolder}</TaskSlot>
        <TaskSlot $w={58}>
          <svg width="22" height="16" viewBox="0 0 28 24">
            <path d="M6 2h21l-4 20H2z" fill="#d9f1fb" />
            <path d="M9 7h13l-2 10H7z" fill="#2f90d0" />
            <rect x="11" y="10" width="8" height="4" fill="#d9f1fb" />
          </svg>
        </TaskSlot>
        <TaskSlot $w={46} $on $line>
          <VncLogo />
        </TaskSlot>
        <TaskSlot $w={11} $line />
        <TaskSlot $w={63} $line>
          <svg width="29" height="28" viewBox="0 0 29 28">
            <g transform="scale(0.85)">
              <GearGroup c="#9cc0d2" hole="#65c9ec" />
            </g>
            <g transform="translate(15 15) scale(0.5)">
              <GearGroup c="#86a8b8" hole="#65c9ec" />
            </g>
          </svg>
        </TaskSlot>
        <TaskSlot $w={59} $line>
          {Toolbox}
        </TaskSlot>
        <TaskSlot $w={59} $line>
          {NetIcon}
        </TaskSlot>
        <TaskSlot $w={60} $line>
          {ChromeIcon}
        </TaskSlot>
        <TaskSlot $w={58} $line>
          {CmdIcon}
        </TaskSlot>
        <TaskTray>
          <TrayIcon>
            <svg width="10" height="6" viewBox="0 0 10 6">
              <path d="M5 0l5 6H0z" fill="#112" />
            </svg>
          </TrayIcon>
          <TrayIcon>
            <TvBadge size={21} />
          </TrayIcon>
          <TrayIcon>
            <svg width="22" height="22" viewBox="0 0 22 22">
              <rect x="1" y="1" width="6" height="14" rx="2" fill="#dff3fa" stroke="#245" />
              <rect x="8" y="6" width="13" height="10" fill="#65c9ec" stroke="#245" strokeWidth="1.300" />
              <path d="M4 15v3h14M14 16v5M10 21h8" stroke="#245" strokeWidth="1.300" fill="none" />
            </svg>
          </TrayIcon>
          <TaskClock>13:39</TaskClock>
        </TaskTray>
      </Taskbar>

      <TvTab>{TvSquare}</TvTab>

      <ArrowLayer width="1338" height="1000" viewBox="0 0 1338 1000">
        <path d="M1304 366L478 927" stroke="#f00" strokeWidth="2.500" />
        <polygon points="469,933 482,920 487,929" fill="#f00" />
      </ArrowLayer>
    </Desk>
  );
}

function GearGroup({ c, hole }: { c: string; hole: string }) {
  return (
    <>
      <g fill={c}>
        {[0, 45, 90, 135, 180, 225, 270, 315].map((a) => (
          <rect key={a} x="9.600" y="1" width="4.800" height="6" transform={`rotate(${a} 12 12)`} />
        ))}
        <circle cx="12" cy="12" r="8" />
      </g>
      <circle cx="12" cy="12" r="3.800" fill={hole} />
    </>
  );
}
